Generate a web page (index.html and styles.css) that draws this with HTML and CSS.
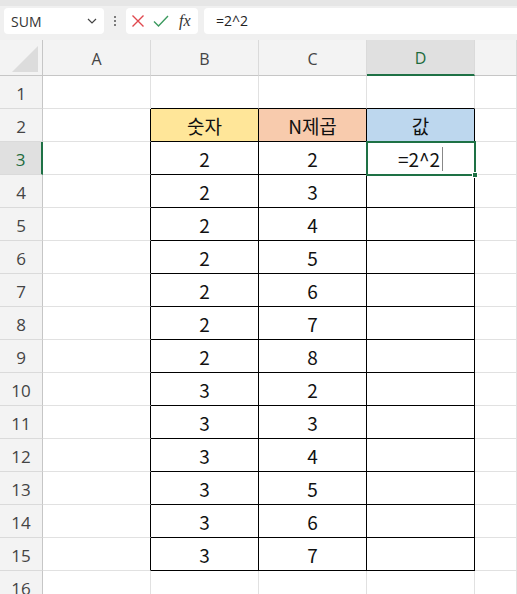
FILE: index.html
```html
<!DOCTYPE html>
<html lang="ko">
<head>
    <meta charset="UTF-8">
    <title>SUM - 숫자 N제곱</title>
    <link rel="stylesheet" href="styles.css">
</head>
<body>
<div class="formula-bar">
    <div class="name-box">
        <span>SUM</span>
        <svg class="chevron" width="10" height="6" viewBox="0 0 10 6"><path d="M1 1l4 4 4-4" fill="none" stroke="#444" stroke-width="1.2"/></svg>
    </div>
    <div class="dots"><i></i><i></i><i></i></div>
    <div class="fn-box">
        <svg width="14" height="14" viewBox="0 0 14 14"><path d="M1.5 1.5l11 11M12.5 1.5l-11 11" stroke="#e0484e" stroke-width="1.4"/></svg>
        <svg width="16" height="14" viewBox="0 0 16 14"><path d="M1 7.5l4.5 4.5L15 2" fill="none" stroke="#3c9a5f" stroke-width="1.4"/></svg>
        <span class="fx">fx</span>
    </div>
    <div class="input-box">=2^2</div>
</div>

<div class="sheet">
    <div class="hd corner"><span class="tri"></span></div>
    <div class="hd">A</div>
    <div class="hd">B</div>
    <div class="hd">C</div>
    <div class="hd sel-col">D</div>
    <div class="hd"></div>

    <div class="rh">1</div><div class="c"></div><div class="c edge-b"></div><div class="c edge-b"></div><div class="c edge-b"></div><div class="c"></div>
    <div class="rh">2</div><div class="c edge-r"></div><div class="c d yellow">숫자</div><div class="c d peach">N제곱</div><div class="c d blue">값</div><div class="c"></div>
    <div class="rh sel-row">3</div><div class="c edge-r"></div><div class="c d">2</div><div class="c d">2</div><div class="c d active"><span class="edit">=2^2</span><span class="handle"></span></div><div class="c"></div>
    <div class="rh">4</div><div class="c edge-r"></div><div class="c d">2</div><div class="c d">3</div><div class="c d"></div><div class="c"></div>
    <div class="rh">5</div><div class="c edge-r"></div><div class="c d">2</div><div class="c d">4</div><div class="c d"></div><div class="c"></div>
    <div class="rh">6</div><div class="c edge-r"></div><div class="c d">2</div><div class="c d">5</div><div class="c d"></div><div class="c"></div>
    <div class="rh">7</div><div class="c edge-r"></div><div class="c d">2</div><div class="c d">6</div><div class="c d"></div><div class="c"></div>
    <div class="rh">8</div><div class="c edge-r"></div><div class="c d">2</div><div class="c d">7</div><div class="c d"></div><div class="c"></div>
    <div class="rh">9</div><div class="c edge-r"></div><div class="c d">2</div><div class="c d">8</div><div class="c d"></div><div class="c"></div>
    <div class="rh">10</div><div class="c edge-r"></div><div class="c d">3</div><div class="c d">2</div><div class="c d"></div><div class="c"></div>
    <div class="rh">11</div><div class="c edge-r"></div><div class="c d">3</div><div class="c d">3</div><div class="c d"></div><div class="c"></div>
    <div class="rh">12</div><div class="c edge-r"></div><div class="c d">3</div><div class="c d">4</div><div class="c d"></div><div class="c"></div>
    <div class="rh">13</div><div class="c edge-r"></div><div class="c d">3</div><div class="c d">5</div><div class="c d"></div><div class="c"></div>
    <div class="rh">14</div><div class="c edge-r"></div><div class="c d">3</div><div class="c d">6</div><div class="c d"></div><div class="c"></div>
    <div class="rh">15</div><div class="c edge-r"></div><div class="c d">3</div><div class="c d">7</div><div class="c d"></div><div class="c"></div>
    <div class="rh">16</div><div class="c"></div><div class="c"></div><div class="c"></div><div class="c"></div><div class="c"></div>
</div>
</body>
</html>
```

FILE: styles.css
```css
* { box-sizing: border-box; }
body { margin: 0; background: #fff; font-family: "Noto Sans CJK KR", "Noto Sans", sans-serif; color: #222; overflow: hidden; }

.formula-bar { height: 40px; background: #f0f0f0; border-top: 6px solid #e6e6e6; display: flex; align-items: flex-start; padding: 2px 0 0 4px; gap: 0; }
.name-box { width: 100px; height: 26px; background: #fff; border-radius: 4px; display: flex; align-items: center; justify-content: space-between; padding: 0 7px 0 7px; font-family: "Open Sans", sans-serif; font-size: 14px; color: #333; }
.dots { width: 22px; height: 26px; display: flex; flex-direction: column; align-items: center; justify-content: center; gap: 2px; }
.dots i { width: 2px; height: 2px; background: #555; border-radius: 50%; }
.fn-box { width: 72px; height: 26px; background: #fff; border-radius: 4px; display: flex; align-items: center; padding: 0 5px; gap: 8px; }
.fx { font-family: "Liberation Serif", serif; font-style: italic; font-size: 16px; color: #333; margin-left: 2px; }
.input-box { flex: 1; height: 26px; margin-left: 6px; background: #fff; border-radius: 4px 0 0 4px; padding: 0 0 0 12px; line-height: 26px; font-family: "Open Sans", sans-serif; font-size: 14px; color: #222; }

.sheet { display: grid; grid-template-columns: 43px 108px 108px 108px 108px 1fr; grid-template-rows: 36px; grid-auto-rows: 33px; }
.hd { background: #f3f3f3; border-right: 1px solid #dadada; border-bottom: 1px solid #c6c6c6; display: flex; align-items: center; justify-content: center; font-family: "Open Sans", sans-serif; font-size: 16px; color: #444; padding-top: 2px; }
.corner { position: relative; border-right-color: #c6c6c6; }
.tri { position: absolute; right: 4px; bottom: 3px; width: 0; height: 0; border-left: 26px solid transparent; border-bottom: 26px solid #dcdcdc; }
.sel-col { background: #e0e0e0; color: #1d6b3d; border-bottom: 2px solid #1e7145; }

.rh { background: #f3f3f3; border-right: 1px solid #c6c6c6; border-bottom: 1px solid #dadada; display: flex; align-items: center; justify-content: center; font-family: "Open Sans", sans-serif; font-size: 17px; color: #444; padding-top: 2px; }
.sel-row { background: #e0e0e0; color: #1d6b3d; border-right: 2px solid #1e7145; }

.c { border-right: 1px solid #e1e1e1; border-bottom: 1px solid #e1e1e1; }
.edge-r { border-right-color: #000; }
.edge-b { border-bottom-color: #000; }
.d { border-right-color: #000; border-bottom-color: #000; display: flex; align-items: center; justify-content: center; font-size: 19px; color: #111; padding-top: 1px; }
.yellow { background: #ffe699; }
.peach { background: #f8cbad; }
.blue { background: #bdd7ee; }

.active { position: relative; outline: 2px solid #1e7145; outline-offset: -1px; }
.edit { border-right: 1px solid #888; padding-right: 2px; line-height: 24px; }
.handle { position: absolute; right: -4px; bottom: -4px; width: 6px; height: 6px; background: #1e7145; border: 1px solid #fff; }
```
